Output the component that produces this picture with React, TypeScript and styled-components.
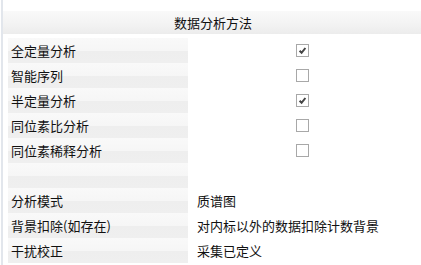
import React from "react";
import styled, { createGlobalStyle } from "styled-components";

const GlobalStyle = createGlobalStyle`
  html, body {
    margin: 0;
    padding: 0;
    background: #fff;
  }
  body {
    font-family: "Noto Sans CJK SC", "Noto Sans", sans-serif;
    font-size: 13px;
    color: #1a1a1a;
  }
`;

type Row = {
  label: string;
  kind: "check" | "text" | "empty";
  checked?: boolean;
  value?: string;
};

const rows: Row[] = [
  { label: "全定量分析", kind: "check", checked: true },
  { label: "智能序列", kind: "check", checked: false },
  { label: "半定量分析", kind: "check", checked: true },
  { label: "同位素比分析", kind: "check", checked: false },
  { label: "同位素稀释分析", kind: "check", checked: false },
  { label: "", kind: "empty" },
  { label: "分析模式", kind: "text", value: "质谱图" },
  { label: "背景扣除(如存在)", kind: "text", value: "对内标以外的数据扣除计数背景" },
  { label: "干扰校正", kind: "text", value: "采集已定义" },
];

const App = () => {
  return (
    <>
      <GlobalStyle />
      <Frame>
        <Header>数据分析方法</Header>
        <Table>
          {rows.map((r, i) => (
            <Line key={i}>
              <Label>{r.label}</Label>
              {r.kind === "check" && (
                <CheckCell>
                  <Box>
                    {r.checked && (
                      <svg width="11" height="11" viewBox="0 0 11 11">
                        <path
                          d="M2.6 5.8 L4.6 7.8 L8.4 3"
                          fill="none"
                          stroke="#454545"
                          strokeWidth="2"
                        />
                      </svg>
                    )}
                  </Box>
                </CheckCell>
              )}
              {r.kind === "text" && <Value>{r.value}</Value>}
              {r.kind === "empty" && <Value />}
            </Line>
          ))}
        </Table>
      </Frame>
    </>
  );
};

export default App;

const Frame = styled.div`
  margin-left: 1px;
  border-left: 2px solid #e2e6ec;
  height: 265px;
  box-sizing: border-box;
  padding-top: 11px;
  overflow: hidden;
`;

const Header = styled.div`
  height: 23px;
  display: flex;
  align-items: center;
  justify-content: center;
  background: linear-gradient(to bottom, #f9f9f9 0%, #f4f4f4 50%, #ececec 100%);
  color: #111;
  padding-left: 2px;
`;

const Table = styled.div`
  margin-top: 4px;
  margin-left: 5px;
  display: flex;
  flex-direction: column;
`;

const Line = styled.div`
  display: grid;
  grid-template-columns: 180px 229px;
  height: 25px;
`;

const Label = styled.div`
  display: flex;
  align-items: center;
  padding-left: 3px;
  background: linear-gradient(
    to bottom,
    #f9f9f9 0%,
    #f6f6f6 50%,
    #eeeeee 52%,
    #efefef 100%
  );
  color: #111;
  white-space: nowrap;
`;

const CheckCell = styled.div`
  display: flex;
  align-items: center;
  justify-content: center;
`;

const Box = styled.div`
  width: 13px;
  height: 13px;
  box-sizing: border-box;
  border: 1px solid #a8a8a8;
  background: #fff;
  display: flex;
  align-items: center;
  justify-content: center;
`;

const Value = styled.div`
  display: flex;
  align-items: center;
  padding-left: 9px;
  color: #111;
  white-space: nowrap;
`;
